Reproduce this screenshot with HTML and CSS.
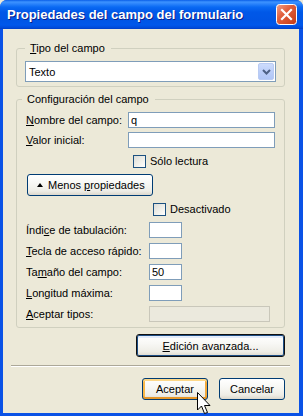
FILE: index.html
```html
<!DOCTYPE html>
<html lang="es">
<head>
<meta charset="utf-8">
<title>Propiedades del campo del formulario</title>
<link rel="stylesheet" href="styles.css">
</head>
<body>
<div class="window">
  <div class="titlebar">
    <span class="title">Propiedades del campo del formulario</span>
    <span class="close">
      <svg width="21" height="21" viewBox="0 0 21 21">
        <defs>
          <linearGradient id="cg" x1="0" y1="0" x2="1" y2="1">
            <stop offset="0" stop-color="#f0a08a"/>
            <stop offset="0.4" stop-color="#e1603e"/>
            <stop offset="1" stop-color="#c43a14"/>
          </linearGradient>
        </defs>
        <rect x="0.5" y="0.5" width="20" height="20" rx="3" fill="url(#cg)" stroke="#ffffff"/>
        <path d="M6 6 L15 15 M15 6 L6 15" stroke="#ffffff" stroke-width="2.2" stroke-linecap="square"/>
      </svg>
    </span>
  </div>
  <div class="client">
    <fieldset class="group group-type">
      <legend class="legend-type"><u>T</u>ipo del campo</legend>
      <div class="select">
        <span class="select-value">Texto</span>
        <span class="select-btn">
          <svg width="9" height="6" viewBox="0 0 9 6"><path d="M1 1 L4.5 4.5 L8 1" fill="none" stroke="#4d6185" stroke-width="2"/></svg>
        </span>
      </div>
    </fieldset>

    <fieldset class="group group-config">
      <legend class="legend-config">Configuración del campo</legend>
      <div class="row">
        <label class="lbl lbl-a"><u>N</u>ombre del campo:</label>
        <input class="txt txt-long" type="text" value="q">
      </div>
      <div class="row row-value">
        <label class="lbl lbl-a"><u>V</u>alor inicial:</label>
        <input class="txt txt-long" type="text" value="">
      </div>
      <div class="check-row check-readonly">
        <span class="check"></span><span class="check-label">Sólo lectura</span>
      </div>
      <button class="btn btn-less" type="button"><span class="tri"></span><span>Menos <u>p</u>ropiedades</span></button>
      <div class="check-row check-disabled">
        <span class="check"></span><span class="check-label">Desactivado</span>
      </div>
      <div class="row row-first-small">
        <label class="lbl lbl-b">Índi<u>c</u>e de tabulación:</label>
        <input class="txt txt-short" type="text" value="">
      </div>
      <div class="row row-small">
        <label class="lbl lbl-b"><u>T</u>ecla de acceso rápido:</label>
        <input class="txt txt-short" type="text" value="">
      </div>
      <div class="row row-small">
        <label class="lbl lbl-b">Ta<u>m</u>año del campo:</label>
        <input class="txt txt-short" type="text" value="50">
      </div>
      <div class="row row-small">
        <label class="lbl lbl-b"><u>L</u>ongitud máxima:</label>
        <input class="txt txt-short" type="text" value="">
      </div>
      <div class="row row-small">
        <label class="lbl lbl-b lbl-disabled"><u>A</u>ceptar tipos:</label>
        <input class="txt txt-disabled" type="text" value="" disabled>
      </div>
    </fieldset>

    <div class="adv-row">
      <button class="btn btn-adv" type="button"><u>E</u>dición avanzada...</button>
    </div>

    <div class="sep"></div>

    <div class="actions">
      <button class="btn btn-action btn-ok" type="button">Aceptar</button>
      <button class="btn btn-action" type="button">Cancelar</button>
    </div>
  </div>
  <svg class="cursor" width="14" height="23" viewBox="0 0 14 23">
    <path d="M0.5 0.5 V18 L4.5 14 L7.5 21.5 L10.5 20.5 L7.5 13.5 H13 Z" fill="#ffffff" stroke="#000000" stroke-width="1" stroke-linejoin="miter"/>
  </svg>
</div>
</body>
</html>
```
FILE: styles.css
```css
html, body {
  margin: 0;
  padding: 0;
  background: #ece9d8;
}

body {
  font-family: "Liberation Sans", Arial, sans-serif;
  font-size: 11px;
  color: #000;
}

.window {
  position: relative;
  width: 303px;
  height: 416px;
  display: flex;
  flex-direction: column;
  border-radius: 7px 7px 0 0;
  overflow: hidden;
  background: #0a4fe0;
}

.titlebar {
  height: 29px;
  flex: none;
  display: flex;
  align-items: center;
  justify-content: space-between;
  padding: 0 6px 0 7px;
  box-sizing: border-box;
  background: linear-gradient(to bottom,
    #0a5ee8 0px, #3d93ff 2px, #2a83fb 4px, #0a6af3 7px,
    #0058e8 12px, #0055e5 20px, #0058eb 25px, #0049d8 28px, #003dc2 29px);
}

.title {
  color: #fff;
  font-family: "Liberation Sans", Arial, sans-serif;
  font-weight: bold;
  font-size: 13px;
  text-shadow: 1px 1px 0 #0a1f8c;
  white-space: nowrap;
}

.close {
  display: flex;
  width: 21px;
  height: 21px;
}

.client {
  flex: 1;
  display: flex;
  flex-direction: column;
  background: #ece9d8;
  border-style: solid;
  border-color: #0a52e6;
  border-width: 0 4px 3px 3px;
  padding: 13px 14px 0 13px;
}

/* Group boxes */
.group {
  margin: 0;
  border: 1px solid #d0d0bf;
  border-radius: 3px;
  min-width: 0;
}

.group legend {
  line-height: 13px;
  height: 13px;
  padding: 0 6px 0 5px;
  color: #000;
}

.group-type {
  padding: 6px 8px 4px 8px;
}

.group-config {
  margin-top: 6px;
  padding: 6px 9px 5px 9px;
}

.legend-config {
  margin-left: -4px;
  padding: 0 5px 0 4px;
}

/* Select */
.select {
  height: 21px;
  box-sizing: border-box;
  border: 1px solid #7f9db9;
  background: #fff;
  display: flex;
  align-items: center;
  justify-content: space-between;
  padding: 0 1px 0 3px;
}

.select-btn {
  width: 16px;
  height: 17px;
  box-sizing: border-box;
  border: 1px solid #b9cbf3;
  border-radius: 2px;
  background: linear-gradient(to bottom, #cddcfc 0%, #bccff9 50%, #b0c6f6 100%);
  display: flex;
  align-items: center;
  justify-content: center;
}

/* Rows */
.row {
  display: flex;
  align-items: center;
  height: 16px;
}

.row-value {
  margin-top: 4px;
}

.row-first-small {
  margin-top: 6px;
}

.row-small {
  margin-top: 5px;
}

.lbl {
  flex: none;
  line-height: 13px;
  white-space: nowrap;
}

.lbl-a {
  width: 102px;
}

.lbl-b {
  width: 123px;
}

.txt {
  height: 16px;
  box-sizing: border-box;
  border: 1px solid #7f9db9;
  background: #fff;
  margin: 0;
  padding: 0 2px;
  font-family: "Liberation Sans", Arial, sans-serif;
  font-size: 11px;
  color: #000;
  outline: none;
}

.txt-long {
  width: 147px;
}

.txt-short {
  width: 33px;
}

.txt-disabled {
  width: 121px;
  border-color: #c9c7ba;
  background: #ebe9dd;
}

/* Checkboxes */
.check-row {
  display: flex;
  align-items: center;
  height: 13px;
  gap: 4px;
}

.check-readonly {
  margin-top: 7px;
  padding-left: 107px;
}

.check-disabled {
  margin-top: 7px;
  padding-left: 127px;
}

.check {
  width: 13px;
  height: 13px;
  box-sizing: border-box;
  border: 1px solid #1c5180;
  background: linear-gradient(135deg, #dcdcd7 0%, #f0f0ea 55%, #ffffff 100%);
}

.check-label {
  line-height: 13px;
}

/* Buttons */
.btn {
  font-family: "Liberation Sans", Arial, sans-serif;
  font-size: 11px;
  color: #000;
  border: 1px solid #003c74;
  border-radius: 3px;
  background: linear-gradient(to bottom, #ffffff 0%, #f8f8f5 40%, #eeede6 80%, #dcd8cd 100%);
  padding: 0;
  margin: 0;
  box-sizing: border-box;
}

.btn-less {
  align-self: flex-start;
  margin-top: 6px;
  margin-left: 1px;
  width: 126px;
  height: 22px;
  display: flex;
  align-items: center;
  padding-left: 9px;
  gap: 5px;
}

.tri {
  width: 0;
  height: 0;
  border-left: 3.5px solid transparent;
  border-right: 3.5px solid transparent;
  border-bottom: 4px solid #000;
}

.adv-row {
  display: flex;
  justify-content: flex-end;
  margin-top: 6px;
}

.btn-adv {
  width: 149px;
  height: 23px;
  border-color: #101010;
  box-shadow: inset 0 0 0 1px #1c4d83, inset 0 2px 0 1px #e3ecfb;
}

.sep {
  margin: 8px -5px 0 -5px;
  height: 1px;
  border-top: 1px solid #aca899;
  border-bottom: 1px solid #ffffff;
  height: 0;
}

.actions {
  display: flex;
  justify-content: flex-end;
  gap: 11px;
  margin-top: 11px;
}

.btn-action {
  width: 66px;
  height: 22px;
}

.btn-ok {
  box-shadow: inset 0 2px 0 0 #fdd889, inset 0 -2px 0 0 #e5972b, inset 2px 0 0 0 #f8b84a, inset -2px 0 0 0 #f2a93c;
}

.cursor {
  position: absolute;
  left: 197px;
  top: 392px;
}
```
